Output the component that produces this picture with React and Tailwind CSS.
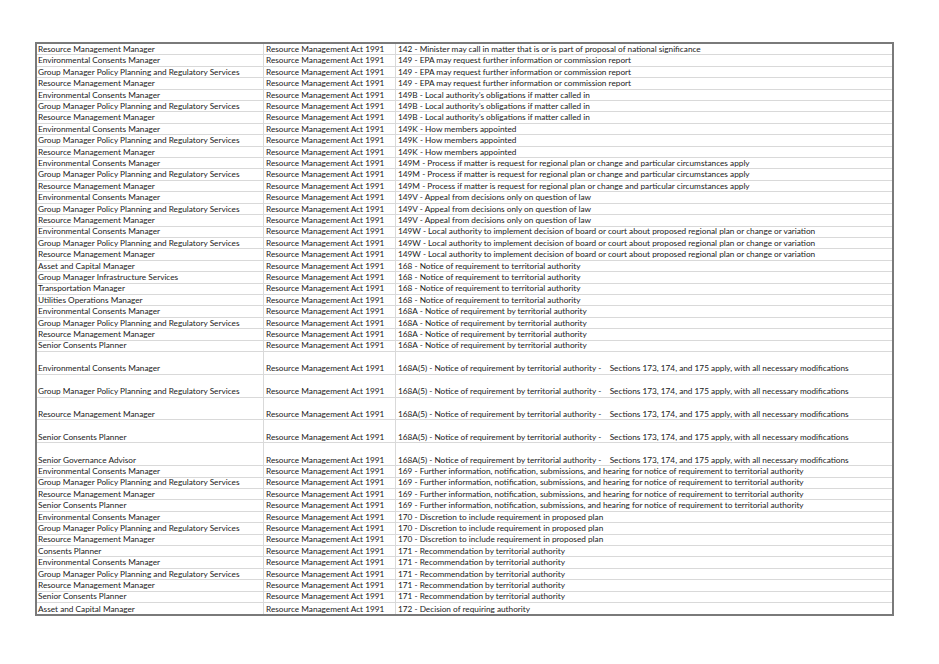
import React from "react";

const ECM = "Environmental Consents Manager";
const GM = "Group Manager Policy Planning and Regulatory Services";
const RMM = "Resource Management Manager";
const SCP = "Senior Consents Planner";
const ACM = "Asset and Capital Manager";

const s149 = "149 - EPA may request further information or commission report";
const s149B = "149B - Local authority\u2019s obligations if matter called in";
const s149K = "149K - How members appointed";
const s149M = "149M - Process if matter is request for regional plan or change and particular circumstances apply";
const s149V = "149V - Appeal from decisions only on question of law";
const s149W = "149W - Local authority to implement decision of board or court about proposed regional plan or change or variation";
const s168 = "168 - Notice of requirement to territorial authority";
const s168A = "168A - Notice of requirement by territorial authority";
const s168A5 = "168A(5) - Notice of requirement by territorial authority -    Sections 173, 174, and 175 apply, with all necessary modifications";
const s169 = "169 - Further information, notification, submissions, and hearing for notice of requirement to territorial authority";
const s170 = "170 - Discretion to include requirement in proposed plan";
const s171 = "171 - Recommendation by territorial authority";

const rows = [
  [RMM, "142 - Minister may call in matter that is or is part of proposal of national significance"],
  [ECM, s149], [GM, s149], [RMM, s149],
  [ECM, s149B], [GM, s149B], [RMM, s149B],
  [ECM, s149K], [GM, s149K], [RMM, s149K],
  [ECM, s149M], [GM, s149M], [RMM, s149M],
  [ECM, s149V], [GM, s149V], [RMM, s149V],
  [ECM, s149W], [GM, s149W], [RMM, s149W],
  [ACM, s168], ["Group Manager Infrastructure Services", s168], ["Transportation Manager", s168], ["Utilities Operations Manager", s168],
  [ECM, s168A], [GM, s168A], [RMM, s168A], [SCP, s168A],
  [ECM, s168A5, true], [GM, s168A5, true], [RMM, s168A5, true], [SCP, s168A5, true], ["Senior Governance Advisor", s168A5, true],
  [ECM, s169], [GM, s169], [RMM, s169], [SCP, s169],
  [ECM, s170], [GM, s170], [RMM, s170],
  ["Consents Planner", s171], [ECM, s171], [GM, s171], [RMM, s171], [SCP, s171],
  [ACM, "172 - Decision of requiring authority"],
];

function Row({ role, section, tall, last }) {
  return (
    <div className={`flex ${tall ? "h-[22.84px]" : "h-[11.42px]"} ${last ? "" : "border-b border-[#d9d9d9]"}`}>
      <div className="w-[227px] h-full flex items-end pl-[1px] pb-[0.5px] border-r border-[#d9d9d9] whitespace-nowrap overflow-hidden leading-[10px]">{role}</div>
      <div className="w-[132px] h-full flex items-end pl-[2px] pb-[0.5px] border-r border-[#d9d9d9] whitespace-nowrap overflow-hidden leading-[10px]">Resource Management Act 1991</div>
      <div className="flex-1 h-full flex items-end pl-[2px] pb-[0.5px] whitespace-pre overflow-hidden leading-[10px]">{section}</div>
    </div>
  );
}

export default function App() {
  return (
    <div className="w-[939px] h-[664px] bg-white pl-[35px] pt-[42px]" style={{ fontFamily: "Lato, 'Liberation Sans', sans-serif" }}>
      <div className="w-[859px] border-2 border-[#7a7a7a] text-[8.25px] text-[#1a1a1a]">
        {rows.map(([role, section, tall], i) => (
          <Row key={i} role={role} section={section} tall={tall} last={i === rows.length - 1} />
        ))}
      </div>
    </div>
  );
}
